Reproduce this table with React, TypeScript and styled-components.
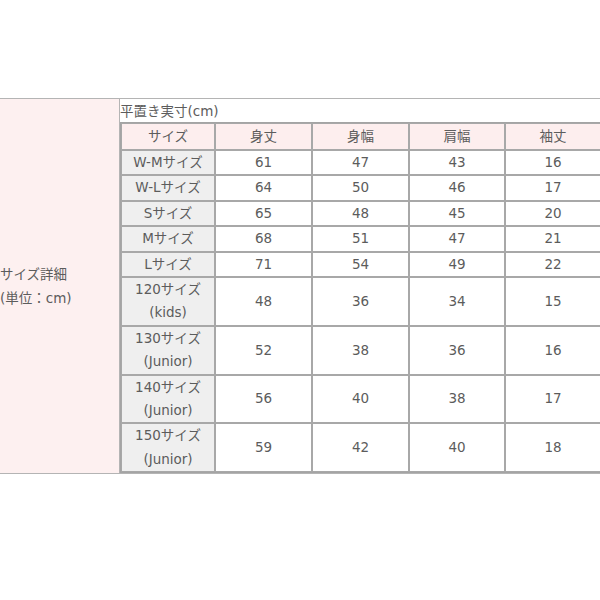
import React from "react";
import styled, { createGlobalStyle } from "styled-components";

const Global = createGlobalStyle`
  html, body { margin: 0; padding: 0; background: #ffffff; overflow: hidden; }
  body { font-family: "DejaVu Sans", "Noto Sans CJK JP", sans-serif; }
`;

const Page = styled.div`
  width: 600px;
  height: 600px;
  padding-top: 98px;
  box-sizing: border-box;
  overflow: hidden;
`;

const OuterTable = styled.table`
  border-collapse: separate;
  border-spacing: 0;
  width: 604px;
  table-layout: fixed;
  border-top: 1px solid #b4b4b4;
  border-bottom: 1px solid #b4b4b4;
  color: #5c5c5c;
  font-size: 13.5px;
  font-family: "DejaVu Sans", "Noto Sans CJK JP", sans-serif;
`;

const LabelCell = styled.td`
  width: 119px;
  background: #fdf0f0;
  border-right: 1px solid #b4b4b4;
  padding: 0;
  vertical-align: middle;
  line-height: 24px;
  white-space: nowrap;
  text-align: left;
`;

const ContentCell = styled.td`
  padding: 0;
  vertical-align: top;
`;

const Caption = styled.div`
  height: 23px;
  line-height: 24px;
  padding-left: 0;
  white-space: nowrap;
`;

const InnerTable = styled.table`
  border-collapse: separate;
  border-spacing: 0;
  table-layout: fixed;
  width: 482px;
  border: 1px solid #a4a4a4;
  font-size: 13.5px;
  color: #5c5c5c;
`;

const Cell = styled.td<{ $kind: "head" | "size" | "value" }>`
  border: 1px solid #a8a8a8;
  padding: 0;
  text-align: center;
  vertical-align: middle;
  line-height: 23.4px;
  white-space: nowrap;
  background: ${(p) =>
    p.$kind === "head" ? "#fdeeee" : p.$kind === "size" ? "#efefef" : "#ffffff"};
`;

const HeadRow = styled.tr`
  & > td {
    line-height: 25px;
  }
`;

const headers = ["サイズ", "身丈", "身幅", "肩幅", "袖丈"];
const widths = [94, 97, 97, 96, 96];

type Row = { size: string[]; values: number[] };

const rows: Row[] = [
  { size: ["W-Mサイズ"], values: [61, 47, 43, 16] },
  { size: ["W-Lサイズ"], values: [64, 50, 46, 17] },
  { size: ["Sサイズ"], values: [65, 48, 45, 20] },
  { size: ["Mサイズ"], values: [68, 51, 47, 21] },
  { size: ["Lサイズ"], values: [71, 54, 49, 22] },
  { size: ["120サイズ", "(kids)"], values: [48, 36, 34, 15] },
  { size: ["130サイズ", "(Junior)"], values: [52, 38, 36, 16] },
  { size: ["140サイズ", "(Junior)"], values: [56, 40, 38, 17] },
  { size: ["150サイズ", "(Junior)"], values: [59, 42, 40, 18] },
];

export default function App() {
  return (
    <Page>
      <Global />
      <OuterTable>
        <tbody>
          <tr>
            <LabelCell>
              サイズ詳細
              <br />
              (単位：cm)
            </LabelCell>
            <ContentCell>
              <Caption>平置き実寸(cm)</Caption>
              <InnerTable>
                <colgroup>
                  {widths.map((w, i) => (
                    <col key={i} style={{ width: w }} />
                  ))}
                </colgroup>
                <tbody>
                  <HeadRow>
                    {headers.map((h) => (
                      <Cell key={h} $kind="head">
                        {h}
                      </Cell>
                    ))}
                  </HeadRow>
                  {rows.map((r, i) => (
                    <tr key={i}>
                      <Cell $kind="size">
                        {r.size.map((s, j) => (
                          <React.Fragment key={j}>
                            {j > 0 && <br />}
                            {s}
                          </React.Fragment>
                        ))}
                      </Cell>
                      {r.values.map((v, j) => (
                        <Cell key={j} $kind="value">
                          {v}
                        </Cell>
                      ))}
                    </tr>
                  ))}
                </tbody>
              </InnerTable>
            </ContentCell>
          </tr>
        </tbody>
      </OuterTable>
    </Page>
  );
}
